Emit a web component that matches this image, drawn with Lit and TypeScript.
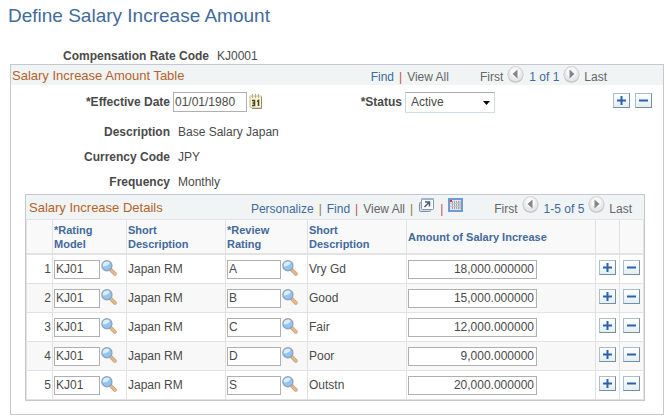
import { LitElement, html, svg, css } from "lit";
import { customElement, state } from "lit/decorators.js";

interface DetailRow {
  model: string;
  modelText: string;
  rating: string;
  ratingText: string;
  amount: string;
}

const lookupIcon = html`<svg class="icon" width="16" height="16" viewBox="0 0 16 16" aria-hidden="true">
  <path d="M9.500 9.500l4.300 4.300" stroke="#a3a3aa" stroke-width="3.800" stroke-linecap="round" />
  <path d="M10.600 10.600l3.200 3.200" stroke="#efb47a" stroke-width="2.800" stroke-linecap="round" />
  <circle cx="5.900" cy="5.700" r="5" fill="#8fc6f8" stroke="#94a3b5" stroke-width="1.400" />
  <path d="M1.800 6.500a4.200 4.200 0 0 1 7-3.800C8 5 5 6.300 1.800 6.500z" fill="#d9eeff" />
</svg>`;

const arrow = (next: boolean) => svg`<svg class="icon" width="17" height="17" viewBox="0 0 17 17" aria-hidden="true">
  <circle cx="8.500" cy="8.900" r="7.900" fill="#bdbdbd" />
  <circle cx="8.500" cy="8" r="7.500" fill="#e9e9e9" stroke="#d4d4d4" stroke-width="1" />
  <circle cx="8.500" cy="6.500" r="5" fill="#f8f8f8" />
  <path d=${next ? "M6.500 3.500l5 4.500-5 4.500z" : "M10.500 3.500l-5 4.500 5 4.500z"} fill="#858585" />
</svg>`;

const calendarIcon = html`<svg class="icon" width="14" height="16" viewBox="0 0 14 16" aria-hidden="true">
  <path d="M1 2h11.500v12H4l-3-1z" fill="#fbf4cf" stroke="#c9bd94" />
  <path d="M12.500 3v11.500H3" fill="none" stroke="#9c8e62" />
  <path d="M3.500 0v4M6.500 0v4M9.500 0v4" stroke="#b3ad93" />
  <path d="M3 6.500h2.500v5H3M3.500 9h2M8 7.500l1.500-1v5.500" fill="none" stroke="#453f35" stroke-width="1.500" />
</svg>`;

const popoutIcon = html`<svg class="icon" width="17" height="15" viewBox="0 0 17 15" aria-hidden="true">
  <rect x="1.500" y="4.500" width="11" height="9" rx="1" fill="#d3dae3" stroke="#7f90a5" />
  <rect x="3.500" y="0.500" width="12" height="11" rx="1" fill="#fafcff" stroke="#8296b0" />
  <path d="M3.500 1h12" stroke="#9db5d1" stroke-width="2" />
  <path d="M6.500 9L11 4.500M7 4h4.500v4.500" fill="none" stroke="#4d5e73" stroke-width="1.500" />
</svg>`;

const gridIcon = html`<svg class="icon" width="15" height="14" viewBox="0 0 15 14" aria-hidden="true">
  <rect x="1" y="1" width="13" height="12" fill="#dce9f8" stroke="#6d9bd8" stroke-width="2" />
  <path d="M2 2h11v10H2z" fill="#e4e4e8" />
  <path d="M4.500 3v8M6.500 3v8M8.500 3v8M10.500 3v8M12 3v8" stroke="#a3a3aa" />
  <path d="M2 5.500h11M2 8.500h11" stroke="#c4c4ca" />
  <rect x="2" y="2" width="2" height="2" fill="#f02a20" />
</svg>`;

@customElement("app-root")
export class AppRoot extends LitElement {
  @state() private rows: DetailRow[] = [
    { model: "KJ01", modelText: "Japan RM", rating: "A", ratingText: "Vry Gd", amount: "18,000.000000" },
    { model: "KJ01", modelText: "Japan RM", rating: "B", ratingText: "Good", amount: "15,000.000000" },
    { model: "KJ01", modelText: "Japan RM", rating: "C", ratingText: "Fair", amount: "12,000.000000" },
    { model: "KJ01", modelText: "Japan RM", rating: "D", ratingText: "Poor", amount: "9,000.000000" },
    { model: "KJ01", modelText: "Japan RM", rating: "S", ratingText: "Outstn", amount: "20,000.000000" },
  ];

  static styles = css`
    :host {
      display: block;
      background: #fff;
      color: #4a4a4a;
      font: 12px/16px "Liberation Sans", Arial, sans-serif;
    }
    * { box-sizing: border-box; }
    main { padding: 4px 6px 5px 8px; }
    h1 { margin: 0; color: #426a9c; font-size: 19px; font-weight: 400; line-height: 24px; }
    h2 { margin: 0; flex: 1; color: #b5622a; font-size: 13px; font-weight: 400; line-height: 22px; }
    a { color: #426a9c; text-decoration: none; }
    button { padding: 0; border: 0; background: none; font: inherit; color: inherit; cursor: pointer; }
    .icon { display: block; flex: none; }
    .icon-button { display: block; flex: none; }
    .label { flex: none; width: 159px; text-align: right; font-weight: 700; }
    .line { display: flex; gap: 8px; height: 25px; align-items: center; }
    .key { height: 16px; margin-top: 20px; }
    .key .label { width: 201px; }
    .panel { margin-left: 2px; border: 1px solid #c5c8d0; padding-bottom: 13px; }
    .bar { display: flex; background: #f0f4f5; }
    .panel-bar { height: 20px; padding: 0 56px 0 1px; }
    .grid-bar { height: 24px; padding: 0 12px 0 3px; }
    .grid-bar h2 { line-height: 26px; }
    .tools, .pager { display: flex; align-items: flex-start; line-height: 24px; }
    .tools { gap: 5px; margin-right: 31px; }
    .grid-bar .tools, .grid-bar .pager { line-height: 28px; }
    .tools .icon-button { margin-top: 3px; }
    .pager { gap: 4px; color: #666; }
    .pager .icon-button { margin-top: 1px; }
    .count { color: #426a9c; margin-left: 1px; }
    .muted { color: #666; }
    .sep { color: #c0504d; }
    .sep-gold { color: #8f7b35; }
    .entry { display: flex; align-items: center; height: 34px; padding-right: 11px; }
    .entry .label { margin-right: 3px; }
    .entry .icon-button { margin-left: 2px; }
    .entry .status-label { width: 139px; }
    .actions { display: flex; gap: 5px; margin-left: auto; padding-bottom: 3px; }
    input {
      width: 100%;
      height: 19px;
      margin: 0;
      padding: 0 2px 0 1px;
      border: 1px solid #b0b0b0;
      background: #fff;
      color: #4a4a4a;
      font: inherit;
      display: block;
      flex: none;
    }
    .date { width: 74px; height: 20px; }
    .model { width: 46px; }
    .rating { width: 54px; }
    .amount { width: 129px; text-align: right; }
    .select { position: relative; width: 90px; }
    select {
      appearance: none;
      display: block;
      width: 100%;
      height: 21px;
      padding: 0 5px;
      border: 1px solid #cddbe6;
      border-top-color: #a6adb4;
      background: #fff;
      color: #4a4a4a;
      font: inherit;
    }
    .caret { position: absolute; right: 5px; top: 9px; pointer-events: none; }
    .step {
      display: block;
      width: 17px;
      height: 15px;
      border: 1px solid #a9bfcb;
      border-right-color: #74909e;
      border-bottom-color: #74909e;
      background: linear-gradient(#ffffff, #e3eef3);
    }
    .step svg { display: block; margin: 0 auto; }
    .details {
      margin: 0 18px 0 14px;
      border: 1px solid #c5c8d0;
    }
    table { width: 100%; table-layout: fixed; border-collapse: separate; border-spacing: 0; border-left: 1px solid #e2e2e4; border-top: 1px solid #e2e2e4; }
    th, td { padding: 0 0 0 1px; border-right: 1px solid #e2e2e4; border-bottom: 1px solid #e2e2e4; text-align: left; overflow: hidden; }
    th { height: 35px; border-bottom-width: 2px; background: #f9f9f9; color: #426a9c; font-size: 11px; line-height: 14px; }
    td { height: 29px; }
    tbody tr:nth-child(even) { background: #f8f8f8; }
    .number { text-align: right; padding-right: 1px; }
    .field { display: flex; align-items: center; gap: 1px; }
    .field .icon-button { padding-bottom: 2px; }
    .act { padding: 0 0 3px; }
    .act .step { margin: 0 auto; }
    .c-num { width: 26px; }
    .c-model { width: 74px; }
    .c-text { width: 99px; }
    .c-rating { width: 82px; }
    .c-step { width: 24px; }
  `;

  private step(add: boolean, what: string) {
    return html`<button class="step" type="button" aria-label=${(add ? "Add " : "Delete ") + what}>
      <svg width="11" height="11" viewBox="0 0 11 11" aria-hidden="true">
        <path d=${add ? "M1 5.500h9M5.500 1v9" : "M1 5.500h9"} stroke="#2a62b0" stroke-width="2" />
      </svg>
    </button>`;
  }

  private pager(count: string) {
    return html`<div class="pager">
      <span>First</span>
      <button class="icon-button" type="button" aria-label="Previous">${arrow(false)}</button>
      <span class="count">${count}</span>
      <button class="icon-button" type="button" aria-label="Next">${arrow(true)}</button>
      <span>Last</span>
    </div>`;
  }

  private row(r: DetailRow, i: number) {
    const n = i + 1;
    return html`<tr>
      <td class="number">${n}</td>
      <td><div class="field">
        <input class="model" aria-label="Rating Model ${n}" .value=${r.model} />
        <button class="icon-button" type="button" aria-label="Look up Rating Model ${n}">${lookupIcon}</button>
      </div></td>
      <td>${r.modelText}</td>
      <td><div class="field">
        <input class="rating" aria-label="Review Rating ${n}" .value=${r.rating} />
        <button class="icon-button" type="button" aria-label="Look up Review Rating ${n}">${lookupIcon}</button>
      </div></td>
      <td>${r.ratingText}</td>
      <td><input class="amount" aria-label="Amount of Salary Increase ${n}" .value=${r.amount} /></td>
      <td class="act">${this.step(true, "row " + n)}</td>
      <td class="act">${this.step(false, "row " + n)}</td>
    </tr>`;
  }

  render() {
    return html`<main>
      <h1>Define Salary Increase Amount</h1>
      <div class="line key"><span class="label">Compensation Rate Code</span><span>KJ0001</span></div>
      <section class="panel">
        <div class="bar panel-bar">
          <h2>Salary Increase Amount Table</h2>
          <div class="tools">
            <a href="#find">Find</a><span class="sep">|</span><a class="muted" href="#all">View All</a>
          </div>
          ${this.pager("1 of 1")}
        </div>
        <div class="entry">
          <label class="label" for="date">*Effective Date</label>
          <input class="date" id="date" .value=${"01/01/1980"} />
          <button class="icon-button" type="button" aria-label="Choose a date">${calendarIcon}</button>
          <label class="label status-label" for="status">*Status</label>
          <div class="select">
            <select id="status"><option>Active</option><option>Inactive</option></select>
            <svg class="caret" width="7" height="4" viewBox="0 0 7 4" aria-hidden="true"><path d="M0 0h7L3.500 4z" /></svg>
          </div>
          <div class="actions">${this.step(true, "effective date")}${this.step(false, "effective date")}</div>
        </div>
        <div class="line"><span class="label">Description</span><span>Base Salary Japan</span></div>
        <div class="line"><span class="label">Currency Code</span><span>JPY</span></div>
        <div class="line"><span class="label">Frequency</span><span>Monthly</span></div>
        <section class="details">
          <div class="bar grid-bar">
            <h2>Salary Increase Details</h2>
            <div class="tools">
              <a href="#personalize">Personalize</a><span class="sep-gold">|</span>
              <a href="#find-row">Find</a><span class="sep">|</span>
              <a class="muted" href="#all-rows">View All</a><span class="sep-gold">|</span>
              <button class="icon-button" type="button" aria-label="Zoom grid">${popoutIcon}</button>
              <span class="sep">|</span>
              <button class="icon-button" type="button" aria-label="Download">${gridIcon}</button>
            </div>
            ${this.pager("1-5 of 5")}
          </div>
          <table>
            <colgroup>
              <col class="c-num" /><col class="c-model" /><col class="c-text" /><col class="c-rating" />
              <col class="c-text" /><col /><col class="c-step" /><col class="c-step" />
            </colgroup>
            <thead><tr>
              <th></th>
              <th>*Rating<br />Model</th>
              <th>Short<br />Description</th>
              <th>*Review<br />Rating</th>
              <th>Short<br />Description</th>
              <th>Amount of Salary Increase</th>
              <th></th>
              <th></th>
            </tr></thead>
            <tbody>${this.rows.map((r, i) => this.row(r, i))}</tbody>
          </table>
        </section>
      </section>
    </main>`;
  }
}
